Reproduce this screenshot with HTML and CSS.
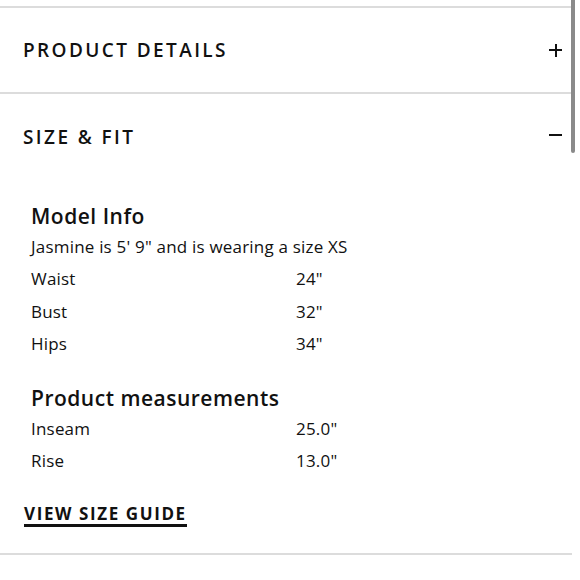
FILE: index.html
```html
<!DOCTYPE html>
<html>
<head>
<meta charset="utf-8">
<link rel="stylesheet" href="styles.css">
</head>
<body>
<div class="page">
  <section class="acc">
    <div class="acc-head">
      <span class="acc-title">PRODUCT DETAILS</span>
      <span class="acc-icon plus"></span>
    </div>
  </section>
  <section class="acc open">
    <div class="acc-head">
      <span class="acc-title">SIZE &amp; FIT</span>
      <span class="acc-icon minus"></span>
    </div>
    <div class="acc-body">
      <h3 class="sub">Model Info</h3>
      <p class="line">Jasmine is 5' 9" and is wearing a size XS</p>
      <div class="row"><span>Waist</span><span>24"</span></div>
      <div class="row"><span>Bust</span><span>32"</span></div>
      <div class="row"><span>Hips</span><span>34"</span></div>
      <h3 class="sub sub2">Product measurements</h3>
      <div class="row"><span>Inseam</span><span>25.0"</span></div>
      <div class="row"><span>Rise</span><span>13.0"</span></div>
      <a class="guide">VIEW SIZE GUIDE</a>
    </div>
  </section>
  <div class="scrollbar"></div>
</div>
</body>
</html>
```
FILE: styles.css
```css
html, body {
  margin: 0;
  padding: 0;
  background: #fff;
}
body {
  font-family: "Open Sans", "Liberation Sans", sans-serif;
  color: #111;
}
.page {
  position: relative;
  width: 580px;
  height: 580px;
  padding-top: 6px;
  box-sizing: border-box;
  overflow: hidden;
}
.acc {
  border-top: 2px solid #dcdcdc;
  margin-right: 8px;
}
.acc.open {
  border-bottom: 2px solid #dcdcdc;
}
.acc-head {
  height: 84px;
  display: flex;
  align-items: center;
  justify-content: space-between;
  padding: 0 10px 0 23px;
}
.acc.open .acc-head {
  height: 86px;
}
.acc-title {
  font-size: 19px;
  font-weight: 600;
  letter-spacing: 2.4px;
  color: #111;
}
.acc-icon {
  position: relative;
  width: 13px;
  height: 13px;
}
.acc-icon::before,
.acc-icon.plus::after {
  content: "";
  position: absolute;
  background: #111;
}
.acc-icon::before {
  left: 0;
  right: 0;
  top: 5.5px;
  height: 2px;
}
.acc-icon.plus::after {
  top: 0;
  bottom: 0;
  left: 5.5px;
  width: 2px;
}
.acc-icon.minus {
  margin-top: -4px;
}
.acc-body {
  padding: 21px 0 26px 0;
}
.sub {
  margin: 0 0 0 31px;
  font-size: 21px;
  font-weight: 600;
  letter-spacing: 0.5px;
  line-height: 30px;
}
.sub2 {
  margin-top: 22px;
}
.line {
  margin: 0 0 0 31px;
  font-size: 17px;
  letter-spacing: 0.2px;
  line-height: 32px;
}
.row {
  display: grid;
  grid-template-columns: 265px 1fr;
  padding-left: 31px;
  font-size: 17px;
  letter-spacing: 0.2px;
  line-height: 32.5px;
}
.guide {
  display: block;
  width: fit-content;
  margin: 26px 0 0 24px;
  font-size: 17px;
  font-weight: 700;
  letter-spacing: 1.6px;
  line-height: 20px;
  border-bottom: 3.5px solid #111;
  color: #111;
}
.scrollbar {
  position: absolute;
  top: 0;
  left: 571px;
  width: 4px;
  height: 153px;
  background: #8a8a8a;
  border-radius: 0 0 2px 2px;
}
```
